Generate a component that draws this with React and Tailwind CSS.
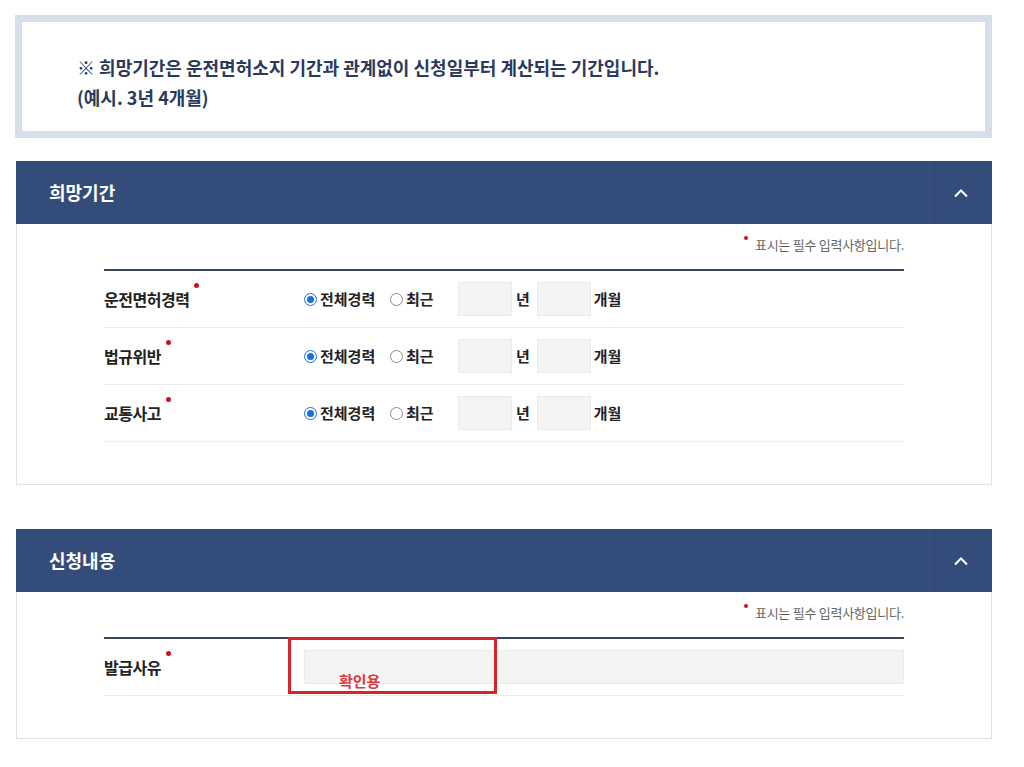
import React from "react";

const Required = () => (
  <span className="absolute right-[-10px] top-[-5px] w-[5px] h-[5px] rounded-full bg-[#d0101b]" />
);

const Radio = ({ checked, label, width }) => (
  <label className={`flex items-center ${width}`}>
    {checked ? (
      <span className="w-[13px] h-[13px] rounded-full border border-[#1a6fe0] p-[2px] flex">
        <span className="flex-1 rounded-full bg-[#1a6fe0]" />
      </span>
    ) : (
      <span className="w-[13px] h-[13px] rounded-full border border-[#8a8a8a] bg-white" />
    )}
    <span className="ml-[3px] text-[15px] font-bold text-[#222]">{label}</span>
  </label>
);

const SectionHeader = ({ title }) => (
  <div className="flex h-[63px] bg-[#344c7a]">
    <div className="flex-1 flex items-center pl-[33px] text-white text-[18px] font-bold">
      {title}
    </div>
    <div className="w-[58px] border-l border-[#2f4572] flex items-center justify-center pr-[6px]">
      <svg width="16" height="10" viewBox="0 0 16 10" fill="none">
        <polyline points="2,8.5 8,2.5 14,8.5" stroke="#fff" strokeWidth="2" />
      </svg>
    </div>
  </div>
);

const RequiredNote = () => (
  <div className="flex justify-end items-start pt-[13px]">
    <span className="mt-[-1px] w-[4px] h-[4px] rounded-full bg-[#c8101b]" />
    <span className="ml-[7px] text-[13px] leading-[16px] text-[#666] tracking-[-0.02em]">
      표시는 필수 입력사항입니다.
    </span>
  </div>
);

const RowLabel = ({ children }) => (
  <div className="w-[200px] shrink-0">
    <span className="relative inline-block text-[16px] leading-[22px] font-bold text-[#222] tracking-[-0.03em]">
      {children}
      <Required />
    </span>
  </div>
);

const PeriodRow = ({ label }) => (
  <div className="flex items-center h-[57px] border-b border-[#ececec]">
    <RowLabel>{label}</RowLabel>
    <Radio checked label="전체경력" width="w-[86px]" />
    <Radio label="최근" width="w-[68px]" />
    <div className="w-[54px] h-[34px] bg-[#f4f4f4] border border-[#ebebeb]" />
    <span className="ml-[4px] text-[15px] font-bold text-[#222]">년</span>
    <div className="ml-[7px] w-[54px] h-[34px] bg-[#f4f4f4] border border-[#ebebeb]" />
    <span className="ml-[3px] text-[15px] font-bold text-[#222]">개월</span>
  </div>
);

export default function App() {
  return (
    <div className="bg-white min-h-[767px] pt-[15px] pb-[30px] font-['Noto_Sans_CJK_KR','Noto_Sans',sans-serif]">
      <div className="ml-[15px] w-[977px] h-[123px] border-[7px] border-[#d6deec] pl-[55px] pt-[30px]">
        <p className="text-[18px] leading-[30px] font-bold text-[#2b3a5c]">
          ※ 희망기간은 운전면허소지 기간과 관계없이 신청일부터 계산되는 기간입니다.
        </p>
        <p className="text-[18px] leading-[30px] font-bold text-[#2b3a5c]">
          (예시. 3년 4개월)
        </p>
      </div>

      <section className="ml-[16px] w-[976px] mt-[23px]">
        <SectionHeader title="희망기간" />
        <div className="border border-t-0 border-[#e3e3e3] px-[87px] pb-[42px]">
          <RequiredNote />
          <div className="mt-[16px] border-t-2 border-[#3a4560]">
            <PeriodRow label="운전면허경력" />
            <PeriodRow label="법규위반" />
            <PeriodRow label="교통사고" />
          </div>
        </div>
      </section>

      <section className="ml-[16px] w-[976px] mt-[44px]">
        <SectionHeader title="신청내용" />
        <div className="border border-t-0 border-[#e3e3e3] px-[87px] pb-[42px]">
          <RequiredNote />
          <div className="mt-[16px] border-t-2 border-[#3a4560]">
            <div className="relative flex items-center h-[57px] border-b border-[#ececec]">
              <RowLabel>발급사유</RowLabel>
              <div className="flex-1 h-[34px] bg-[#f4f4f4] border border-[#ebebeb]" />
              <div className="absolute left-[184px] top-[-2px] w-[209px] h-[57px] border-[3px] border-[#d8232a]">
                <span className="absolute left-[48px] top-[31px] text-[15px] leading-[20px] font-bold text-[#e03a40]">
                  확인용
                </span>
              </div>
            </div>
          </div>
        </div>
      </section>
    </div>
  );
}
